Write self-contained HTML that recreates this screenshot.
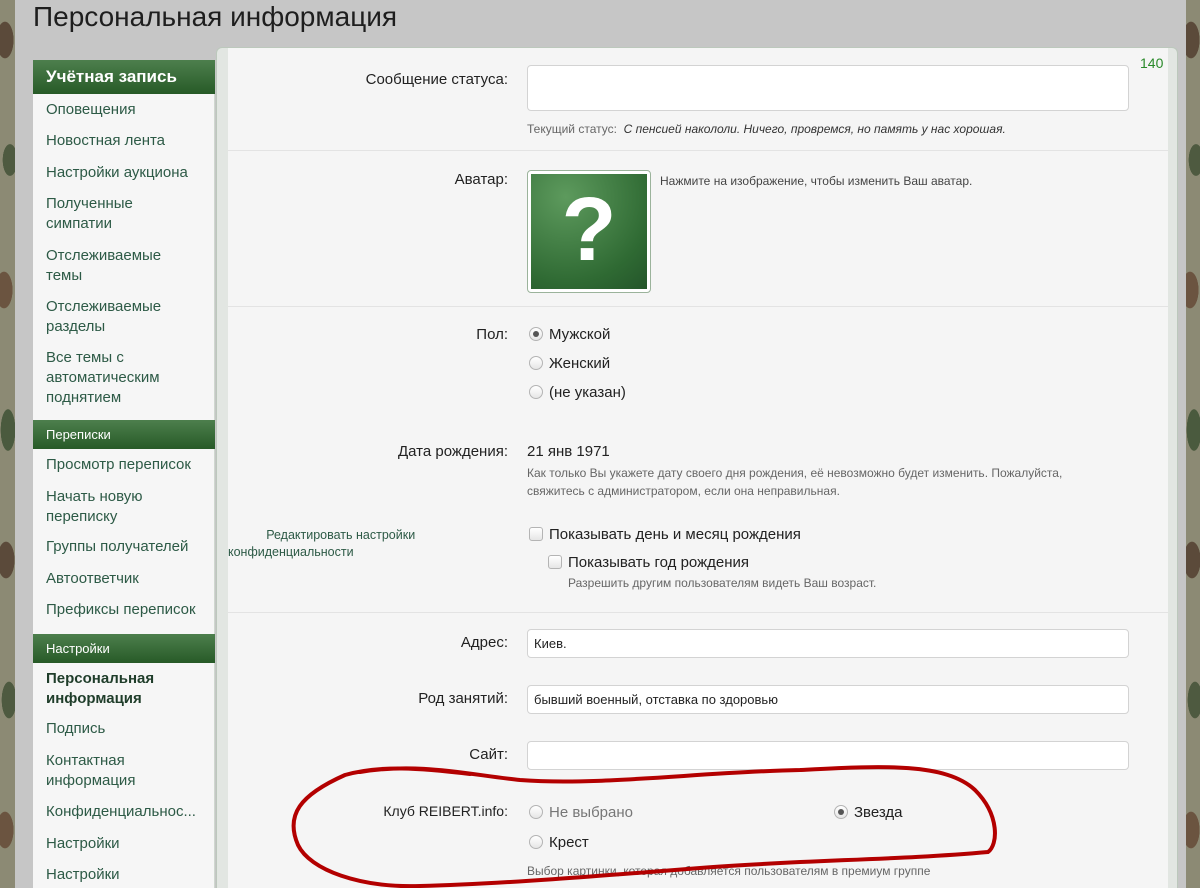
<!DOCTYPE html>
<html style="width:1200px;height:888px;overflow:hidden"><head><meta charset="utf-8"><style>
*{margin:0;padding:0;box-sizing:border-box}
body{width:1200px;height:888px;overflow:hidden;position:relative;background:#c6c6c6;font-family:"Liberation Sans","DejaVu Sans",sans-serif;color:#222}
.camo{position:absolute;top:0;height:888px;background:radial-gradient(ellipse 14px 30px at 5px 40px,#5b4a3a 60%,transparent 62%),radial-gradient(ellipse 12px 26px at 10px 160px,#4e5a40 60%,transparent 62%),radial-gradient(ellipse 14px 30px at 4px 290px,#6b5440 60%,transparent 62%),radial-gradient(ellipse 12px 34px at 8px 430px,#4a5a3e 60%,transparent 62%),radial-gradient(ellipse 14px 30px at 6px 560px,#5b4a3a 60%,transparent 62%),radial-gradient(ellipse 12px 30px at 9px 700px,#4e5a40 60%,transparent 62%),radial-gradient(ellipse 14px 30px at 5px 830px,#6b5440 60%,transparent 62%),#8c8a74}
.a{position:absolute;white-space:nowrap}
#title{left:33px;top:1px;font-size:28px;color:#1e1e1e}
#side{position:absolute;left:33px;top:60px;width:182px;height:828px;background:#f6f6f6;border-right:1px solid #cfd8cf}
.hd{position:absolute;left:0;width:182px;background:linear-gradient(#4d7f4d,#275a27);color:#fff;padding-left:13px}
.si{position:absolute;left:13px;font-size:15px;color:#2d5a46;line-height:20px}
#panel{position:absolute;left:216px;top:47px;width:962px;height:841px;background:#e2e6e2;border:1px solid #bcc8bc;border-bottom:none;border-radius:6px 6px 0 0}
#main{position:absolute;left:228px;top:48px;width:940px;height:840px;background:#f5f5f5}
.lb{position:absolute;font-size:15px;color:#222;text-align:right;right:692px}
.inp{position:absolute;left:527px;width:602px;background:#fff;border:1px solid #d3d3d3;border-radius:4px;font-size:13px;padding:6px 6px}
.hr{position:absolute;left:228px;width:940px;height:1px;background:#e3e3e3}
.hp{position:absolute;font-size:12px;color:#666;white-space:nowrap}
.v{position:absolute;font-size:15px;color:#222;white-space:nowrap}
.r{position:absolute;width:14px;height:14px;border-radius:50%;border:1px solid #b4b4b4;background:linear-gradient(#fff,#e6e6e6)}
.r.on::after{content:"";position:absolute;left:3px;top:3px;width:6px;height:6px;border-radius:50%;background:#555}
.c{position:absolute;width:14px;height:14px;border:1px solid #b4b4b4;border-radius:3px;background:linear-gradient(#fff,#e6e6e6)}
</style></head><body>
<div class="camo" style="left:0;width:15px"></div>
<div class="camo" style="left:1186px;width:14px"></div>
<div class="a" id="title">Персональная информация</div>
<div id="panel"></div>
<div id="main"></div>
<div class="a" style="left:1140px;top:55px;font-size:14px;color:#2a8a2a">140</div>
<div id="side">
<div class="hd" style="top:0;height:34px;line-height:34px;font-size:17px;font-weight:bold">Учётная запись</div>
<div class="si" style="top:40px">Оповещения</div>
<div class="si" style="top:71px">Новостная лента</div>
<div class="si" style="top:103px">Настройки аукциона</div>
<div class="si" style="top:134px">Полученные<br>симпатии</div>
<div class="si" style="top:186px">Отслеживаемые<br>темы</div>
<div class="si" style="top:237px">Отслеживаемые<br>разделы</div>
<div class="si" style="top:288px">Все темы с<br>автоматическим<br>поднятием</div>
<div class="hd" style="top:360px;height:29px;line-height:29px;font-size:13px">Переписки</div>
<div class="si" style="top:395px">Просмотр переписок</div>
<div class="si" style="top:427px">Начать новую<br>переписку</div>
<div class="si" style="top:477px">Группы получателей</div>
<div class="si" style="top:509px">Автоответчик</div>
<div class="si" style="top:540px">Префиксы переписок</div>
<div class="hd" style="top:574px;height:29px;line-height:29px;font-size:13px">Настройки</div>
<div class="si" style="top:609px;font-weight:bold;color:#1f3d2a">Персональная<br>информация</div>
<div class="si" style="top:659px">Подпись</div>
<div class="si" style="top:691px">Контактная<br>информация</div>
<div class="si" style="top:742px">Конфиденциальнос...</div>
<div class="si" style="top:774px">Настройки</div>
<div class="si" style="top:805px">Настройки</div>
</div>

<div class="lb" style="top:71px">Сообщение статуса:</div>
<div class="inp" style="top:65px;height:46px"></div>
<div class="hp" style="left:527px;top:122px">Текущий статус: &nbsp;<i style="color:#333">С пенсией накололи. Ничего, провремся, но память у нас хорошая.</i></div>
<div class="hr" style="top:150px"></div>

<div class="lb" style="top:171px">Аватар:</div>
<div class="a" style="left:527px;top:170px;width:124px;height:123px;border:1px solid #9bb39b;border-radius:4px;background:#fff;padding:3px">
<div style="width:116px;height:115px;background:radial-gradient(circle at 30% 20%,#5d9a5d,#2f6a33 70%,#24552a);position:relative;overflow:hidden">
<div style="position:absolute;left:0;right:0;top:8px;text-align:center;color:#fff;font-size:90px;font-weight:bold;line-height:96px">?</div>
</div></div>
<div class="hp" style="left:660px;top:174px;font-size:12px;color:#444">Нажмите на изображение, чтобы изменить Ваш аватар.</div>
<div class="hr" style="top:306px"></div>

<div class="lb" style="top:326px">Пол:</div>
<div class="r on" style="left:529px;top:327px"></div><div class="v" style="left:549px;top:326px">Мужской</div>
<div class="r" style="left:529px;top:356px"></div><div class="v" style="left:549px;top:355px">Женский</div>
<div class="r" style="left:529px;top:385px"></div><div class="v" style="left:549px;top:384px">(не указан)</div>

<div class="lb" style="top:443px">Дата рождения:</div>
<div class="v" style="left:527px;top:443px">21 янв 1971</div>
<div class="hp" style="left:527px;top:464px;line-height:18px">Как только Вы укажете дату своего дня рождения, её невозможно будет изменить. Пожалуйста,<br>свяжитесь с администратором, если она неправильная.</div>

<div class="hp" style="left:228px;top:527px;line-height:17px;color:#2d5a46;font-size:12.5px">&nbsp;&nbsp;&nbsp;&nbsp;&nbsp;&nbsp;&nbsp;&nbsp;&nbsp;&nbsp;&nbsp;Редактировать настройки<br>конфиденциальности</div>
<div class="c" style="left:529px;top:527px"></div><div class="v" style="left:549px;top:526px">Показывать день и месяц рождения</div>
<div class="c" style="left:548px;top:555px"></div><div class="v" style="left:568px;top:554px">Показывать год рождения</div>
<div class="hp" style="left:568px;top:576px">Разрешить другим пользователям видеть Ваш возраст.</div>
<div class="hr" style="top:612px"></div>

<div class="lb" style="top:634px">Адрес:</div>
<div class="inp" style="top:629px;height:29px">Киев.</div>
<div class="lb" style="top:690px">Род занятий:</div>
<div class="inp" style="top:685px;height:29px">бывший военный, отставка по здоровью</div>
<div class="lb" style="top:746px">Сайт:</div>
<div class="inp" style="top:741px;height:29px"></div>

<div class="lb" style="top:803px;font-size:14px">Клуб REIBERT.info:</div>
<div class="r" style="left:529px;top:805px"></div><div class="v" style="left:549px;top:804px;color:#777">Не выбрано</div>
<div class="r on" style="left:834px;top:805px"></div><div class="v" style="left:854px;top:804px">Звезда</div>
<div class="r" style="left:529px;top:835px"></div><div class="v" style="left:549px;top:834px">Крест</div>
<div class="hp" style="left:527px;top:864px">Выбор картинки, которая добавляется пользователям в премиум группе</div>

<svg style="position:absolute;left:0;top:0" width="1200" height="888"><path d="M360 772 C420 762 470 775 520 780 C600 786 700 772 800 770 C880 766 945 762 975 790 C1000 815 998 845 988 852 C900 860 800 860 700 868 C600 876 500 884 420 886 C360 888 310 870 298 845 C285 815 300 795 345 775 C380 765 420 768 470 774" fill="none" stroke="#b30000" stroke-width="4" stroke-linecap="round"/></svg>
</body></html>
